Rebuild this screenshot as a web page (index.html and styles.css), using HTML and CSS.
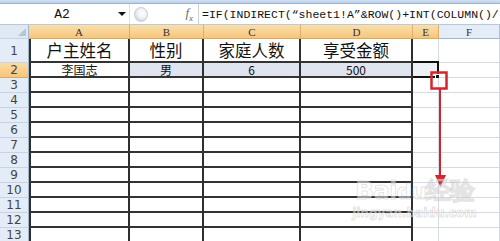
FILE: index.html
```html
<!DOCTYPE html>
<html>
<head>
  <title>Sheet1</title>
  <link rel="stylesheet" href="styles.css">
</head>
<body>
  <div class="app">
    <div class="ribbon-edge"></div>

    <div class="formula-bar">
      <div class="name-box">
        <span class="name">A2</span>
        <span class="drop"></span>
      </div>
      <div class="tools">
        <span class="grip"></span>
        <span class="fx">f<sub>x</sub></span>
      </div>
      <div class="formula">=IF(INDIRECT(“sheet1!A”&amp;ROW()+INT(COLUMN()/</div>
    </div>

    <div class="sheet">
      <div class="row head">
        <div class="rh corner"><span class="tri"></span></div>
        <div class="ch a on">A</div>
        <div class="ch b on">B</div>
        <div class="ch c on">C</div>
        <div class="ch d on">D</div>
        <div class="ch e on">E</div>
        <div class="ch f">F</div>
      </div>
      <div class="row first">
        <div class="rh">1</div>
        <div class="cell a big">户主姓名</div>
        <div class="cell b big">性别</div>
        <div class="cell c big">家庭人数</div>
        <div class="cell d big">享受金额</div>
        <div class="cell e"></div>
        <div class="cell f"></div>
      </div>
      <div class="row sel">
        <div class="rh on">2</div>
        <div class="cell a">李国志</div>
        <div class="cell b">男</div>
        <div class="cell c">6</div>
        <div class="cell d">500</div>
        <div class="cell e"><span class="handle"></span></div>
        <div class="cell f"></div>
      </div>
      <div class="row"><div class="rh">3</div><div class="cell a"></div><div class="cell b"></div><div class="cell c"></div><div class="cell d"></div><div class="cell e"></div><div class="cell f"></div></div>
      <div class="row"><div class="rh">4</div><div class="cell a"></div><div class="cell b"></div><div class="cell c"></div><div class="cell d"></div><div class="cell e"></div><div class="cell f"></div></div>
      <div class="row"><div class="rh">5</div><div class="cell a"></div><div class="cell b"></div><div class="cell c"></div><div class="cell d"></div><div class="cell e"></div><div class="cell f"></div></div>
      <div class="row"><div class="rh">6</div><div class="cell a"></div><div class="cell b"></div><div class="cell c"></div><div class="cell d"></div><div class="cell e"></div><div class="cell f"></div></div>
      <div class="row"><div class="rh">7</div><div class="cell a"></div><div class="cell b"></div><div class="cell c"></div><div class="cell d"></div><div class="cell e"></div><div class="cell f"></div></div>
      <div class="row"><div class="rh">8</div><div class="cell a"></div><div class="cell b"></div><div class="cell c"></div><div class="cell d"></div><div class="cell e"></div><div class="cell f"></div></div>
      <div class="row"><div class="rh">9</div><div class="cell a"></div><div class="cell b"></div><div class="cell c"></div><div class="cell d"></div><div class="cell e"></div><div class="cell f"></div></div>
      <div class="row"><div class="rh">10</div><div class="cell a"></div><div class="cell b"></div><div class="cell c"></div><div class="cell d"></div><div class="cell e"></div><div class="cell f"></div></div>
      <div class="row"><div class="rh">11</div><div class="cell a"></div><div class="cell b"></div><div class="cell c"></div><div class="cell d"></div><div class="cell e"></div><div class="cell f"></div></div>
      <div class="row"><div class="rh">12</div><div class="cell a"></div><div class="cell b"></div><div class="cell c"></div><div class="cell d"></div><div class="cell e"></div><div class="cell f"></div></div>
      <div class="row"><div class="rh">13</div><div class="cell a"></div><div class="cell b"></div><div class="cell c"></div><div class="cell d"></div><div class="cell e"></div><div class="cell f"></div></div>
    </div>

    <!-- red note drawn over the sheet -->
    <svg class="mark" width="500" height="241" viewBox="0 0 500 241">
      <rect x="431.5" y="72.5" width="15" height="16" fill="none" stroke="#d3262a" stroke-width="2.5"/>
      <line x1="440" y1="89" x2="440" y2="178" stroke="#d3262a" stroke-width="2"/>
      <polygon points="435,175 446,175 440.5,187" fill="#d3262a"/>
    </svg>

    <div class="watermark">
      <div class="wm-big">Bai<span class="du">du</span>经验</div>
      <div class="wm-small">jingyan.baidu.com</div>
    </div>
  </div>
</body>
</html>
```

FILE: styles.css
```css
* { box-sizing: border-box; }
body { margin: 0; background: #fff; font-family: "Liberation Sans", Arial, sans-serif; }
.app { position: relative; width: 500px; height: 241px; overflow: hidden; background: #d6e0ec; }

.ribbon-edge { height: 4px; background: linear-gradient(#d3e1f2, #bcd0e8); border-bottom: 1px solid #9db4d2; }

.formula-bar { display: flex; height: 21px; background: #fff; border-bottom: 1px solid #b9c9dd; }
.name-box { width: 130px; display: flex; align-items: center; border-right: 1px solid #d9e2ee; }
.name { flex: 1; text-align: center; font-family: "Liberation Mono", monospace; font-size: 13px; color: #111; padding-left: 6px; }
.drop { width: 0; height: 0; border-left: 4px solid transparent; border-right: 4px solid transparent; border-top: 4px solid #111; margin-right: 3px; }
.tools { width: 69px; display: flex; align-items: center; border-right: 1px solid #c7d3e2; }
.grip { width: 14px; height: 15px; margin-left: 4px; border-radius: 50%; background: radial-gradient(circle at 60% 40%, #fff 0, #eef1f5 45%, #b8c2ce 100%); border: 1px solid #c9d1dc; }
.fx { margin-left: auto; margin-right: 5px; font-family: "Liberation Serif", serif; font-style: italic; font-size: 13px; color: #6a6a6a; }
.fx sub { font-size: 9px; }
.formula { flex: 1; padding-left: 3px; font-family: "Liberation Mono", monospace; font-size: 11.5px; line-height: 21px; color: #111; white-space: nowrap; overflow: hidden; }

.sheet { background: #fff; }
.row { display: flex; height: 15px; }
.row.head { height: 14px; }
.row.first { height: 24px; }

.rh { width: 29px; flex: none; display: flex; align-items: center; justify-content: center; background: #e4ecf7; border-right: 1px solid #9eb6ce; border-bottom: 1px solid #c5d3e4; font-family: "DejaVu Sans", sans-serif; font-size: 12px; color: #444; }
.rh.on { background: linear-gradient(#fbdca4, #f5c57c); border-bottom-color: #e0a955; }
.corner { position: relative; background: #e0e8f3; }
.tri { position: absolute; right: 2px; bottom: 2px; width: 0; height: 0; border-left: 8px solid transparent; border-bottom: 8px solid #b5c5d8; }

.a { width: 101px; }
.b { width: 74px; }
.c { width: 97px; }
.d { width: 112px; }
.e { width: 26px; }
.f { width: 61px; }

.ch { flex: none; display: flex; align-items: center; justify-content: center; font-family: "Liberation Serif", serif; font-size: 11px; color: #333; background: #e4ecf7; border-right: 1px solid #b3c4d8; border-bottom: 1px solid #9eb6ce; }
.ch.on { background: linear-gradient(#fbdfab, #f6c67d); border-right-color: #dcae6b; border-bottom-color: #e2a74f; }

.cell { flex: none; display: flex; align-items: center; justify-content: center; position: relative; font-family: "Noto Sans CJK SC", sans-serif; font-size: 12px; line-height: 13px; color: #111; background: #fff; border-right: 2px solid #2f2f2f; border-bottom: 2px solid #333; }
.cell.a { border-left: 2px solid #2f2f2f; }
.cell.e, .cell.f { border-right: 1px solid #d4dbe6; border-bottom: 1px solid #d4dbe6; }
.cell.big { font-size: 16.5px; line-height: 17px; }

.sel .cell.b, .sel .cell.c, .sel .cell.d { background: #e0e4ef; }
.sel .cell.e { background: #eef0f6; border-top: 2px solid #111; border-right: 2px solid #111; border-bottom: 2px solid #111; margin-top: -2px; height: 17px; }
.handle { position: absolute; right: -4px; bottom: -4px; width: 6px; height: 6px; background: #111; border: 1px solid #fff; }

.mark { position: absolute; left: 0; top: 0; pointer-events: none; }

.watermark { position: absolute; left: 352px; top: 177px; width: 125px; text-align: center; color: rgba(255,255,255,0.5); -webkit-text-stroke: 1px rgba(160,160,160,0.3); pointer-events: none; }
.wm-big { font-family: "DejaVu Sans", sans-serif; font-weight: bold; font-size: 25px; line-height: 28px; letter-spacing: -1px; }
.wm-big .du { font-size: 22px; }
.wm-small { font-family: "DejaVu Sans", sans-serif; font-weight: bold; font-size: 12px; line-height: 14px; }
```
